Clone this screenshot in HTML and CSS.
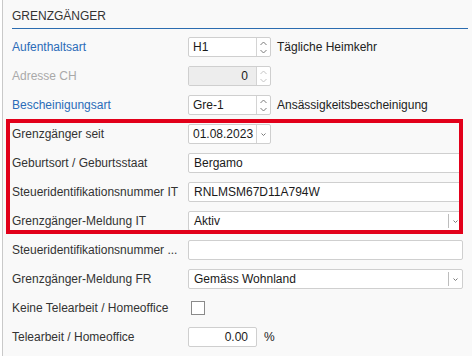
FILE: index.html
```html
<!DOCTYPE html>
<html lang="de">
<head>
  <meta charset="UTF-8">
  <title>Grenzgänger</title>
  <link rel="stylesheet" href="styles.css">
</head>
<body>
  <div class="panel">
    <div class="head">GRENZGÄNGER</div>

    <div class="rows">
      <div class="row">
        <span class="lbl link">Aufenthaltsart</span>
        <div class="spin">
          <span class="val">H1</span>
          <span class="arrows">
            <svg width="7" height="5" viewBox="0 0 7 5"><polyline points="0.5,4 3.5,1 6.5,4" /></svg>
            <svg width="7" height="5" viewBox="0 0 7 5"><polyline points="0.5,1 3.5,4 6.5,1" /></svg>
          </span>
        </div>
        <span class="after">Tägliche Heimkehr</span>
      </div>

      <div class="row">
        <span class="lbl muted">Adresse CH</span>
        <div class="spin off">
          <span class="val num">0</span>
          <span class="arrows">
            <svg width="7" height="5" viewBox="0 0 7 5"><polyline points="0.5,4 3.5,1 6.5,4" /></svg>
            <svg width="7" height="5" viewBox="0 0 7 5"><polyline points="0.5,1 3.5,4 6.5,1" /></svg>
          </span>
        </div>
      </div>

      <div class="row">
        <span class="lbl link">Bescheinigungsart</span>
        <div class="spin">
          <span class="val">Gre-1</span>
          <span class="arrows">
            <svg width="7" height="5" viewBox="0 0 7 5"><polyline points="0.5,4 3.5,1 6.5,4" /></svg>
            <svg width="7" height="5" viewBox="0 0 7 5"><polyline points="0.5,1 3.5,4 6.5,1" /></svg>
          </span>
        </div>
        <span class="after">Ansässigkeitsbescheinigung</span>
      </div>

      <div class="row">
        <span class="lbl">Grenzgänger seit</span>
        <div class="spin date">
          <span class="val">01.08.2023</span>
          <span class="arrows">
            <svg width="7" height="5" viewBox="0 0 7 5"><polyline points="1.5,1.5 3.5,3.5 5.5,1.5" /></svg>
          </span>
        </div>
      </div>

      <div class="row">
        <span class="lbl">Geburtsort / Geburtsstaat</span>
        <div class="field wide"><span class="val">Bergamo</span></div>
      </div>

      <div class="row">
        <span class="lbl">Steueridentifikationsnummer IT</span>
        <div class="field wide"><span class="val">RNLMSM67D11A794W</span></div>
      </div>

      <div class="row">
        <span class="lbl">Grenzgänger-Meldung IT</span>
        <div class="field wide select">
          <span class="val">Aktiv</span>
          <span class="drop">
            <svg width="7" height="5" viewBox="0 0 7 5"><polyline points="1.5,1.5 3.5,3.5 5.5,1.5" /></svg>
          </span>
        </div>
      </div>

      <div class="row">
        <span class="lbl">Steueridentifikationsnummer ...</span>
        <div class="field wide"><span class="val"></span></div>
      </div>

      <div class="row">
        <span class="lbl">Grenzgänger-Meldung FR</span>
        <div class="field wide select">
          <span class="val">Gemäss Wohnland</span>
          <span class="drop">
            <svg width="7" height="5" viewBox="0 0 7 5"><polyline points="1.5,1.5 3.5,3.5 5.5,1.5" /></svg>
          </span>
        </div>
      </div>

      <div class="row">
        <span class="lbl">Keine Telearbeit / Homeoffice</span>
        <span class="check"></span>
      </div>

      <div class="row">
        <span class="lbl">Telearbeit / Homeoffice</span>
        <div class="field short"><span class="val num">0.00</span></div>
        <span class="after pct">%</span>
      </div>
    </div>

    <div class="mark"></div>
  </div>
</body>
</html>
```

FILE: styles.css
```css
html, body { margin: 0; background: #fff; }
body {
  font-family: "Liberation Sans", Arial, sans-serif;
  font-size: 12px;
  color: #333;
}

.panel {
  position: relative;
  margin-left: 2px;
  width: 456px;
  height: 356px;
  padding: 0 10px 0 9px;
  background: #f9f9f9;
  border-left: 1px solid #c9c9c9;
  border-right: 1px solid #d6d6d6;
}

.head {
  padding: 9px 0 4px;
  line-height: 15px;
  border-bottom: 1px solid #2b6cb0;
  color: #333;
}

.rows {
  display: flex;
  flex-direction: column;
  gap: 9px;
  padding-top: 8px;
}

.row {
  display: flex;
  align-items: center;
  height: 20px;
}

.lbl {
  width: 176px;
  flex-shrink: 0;
  white-space: nowrap;
}
.lbl.link { color: #2b6cb8; }
.lbl.muted { color: #a9a9a9; }

.spin, .field {
  display: flex;
  align-items: center;
  box-sizing: border-box;
  height: 20px;
  flex-shrink: 0;
  background: #fff;
  border: 1px solid #cfcfcf;
  border-radius: 2px;
  color: #1a1a1a;
}

.spin { width: 83px; }
.spin .val {
  width: 68px;
  box-sizing: border-box;
  height: 100%;
  line-height: 18px;
  padding: 0 4px;
  border-right: 1px solid #d4d4d4;
}
.spin.off { background: #fff; }
.spin.off .val { background: #ededed; }
.spin.off polyline { stroke: #c4c4c4; }

.val.num { text-align: right; padding-right: 8px; }

.arrows {
  flex: 1;
  display: flex;
  flex-direction: column;
  align-items: center;
  justify-content: center;
  gap: 3px;
}
.date .arrows { gap: 0; }

svg polyline {
  fill: none;
  stroke: #7a7a7a;
  stroke-width: 1;
}

.after { margin-left: 6px; white-space: nowrap; color: #222; }
.after.pct { margin-left: 7px; }

.field .val {
  flex: 1;
  line-height: 18px;
  padding: 0 5px;
}
.field.wide { width: 275px; }
.field.short { width: 69px; }
.field.short .val { padding-right: 8px; }

.select .drop {
  display: flex;
  align-items: center;
  justify-content: center;
  width: 12px;
  height: 14px;
  border-left: 1px solid #bdbdbd;
  margin-right: 1px;
}

.check {
  box-sizing: border-box;
  width: 14px;
  height: 14px;
  margin-left: 3px;
  background: #fff;
  border: 1px solid #8a8a8a;
}

.mark {
  position: absolute;
  left: 3px;
  top: 119px;
  width: 449px;
  height: 107px;
  border: 4px solid #e2001a;
}
```
